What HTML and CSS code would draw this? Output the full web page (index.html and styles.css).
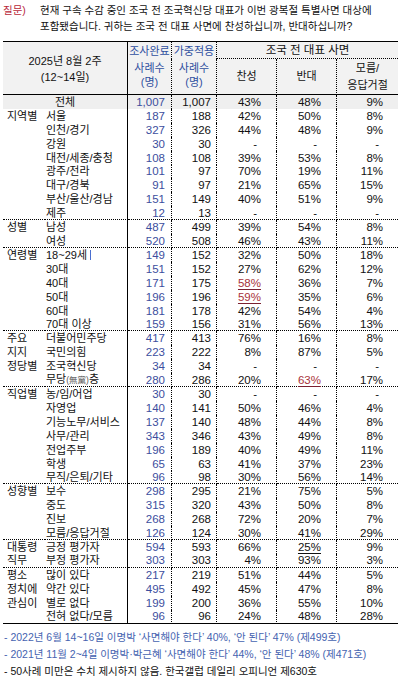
FILE: index.html
```html
<!DOCTYPE html>
<html lang="ko">
<head>
<meta charset="utf-8">
<title>조국 전 대표 사면</title>
<link rel="stylesheet" href="styles.css">
</head>
<body>
<div class="page">
  <div class="question">
    <span class="q-label">질문)</span>
    <p class="q-text"><span class="q-line">현재 구속 수감 중인 조국 전 조국혁신당 대표가 이번 광복절 특별사면 대상에</span><span class="q-line">포함됐습니다. 귀하는 조국 전 대표 사면에 찬성하십니까, 반대하십니까?</span></p>
  </div>
  <table class="poll">
    <colgroup>
      <col class="w-cat"><col class="w-lab"><col class="w-n1"><col class="w-n2"><col class="w-p"><col class="w-p"><col class="w-p3">
    </colgroup>
    <thead>
      <tr class="h1">
        <th class="h-period" colspan="2" rowspan="2">2025년 8월 2주<br>(12~14일)</th>
        <th class="h-blue dot-r">조사완료</th>
        <th class="h-blue dot-r">가중적용</th>
        <th class="h-topic" colspan="3">조국 전 대표 사면</th>
      </tr>
      <tr class="h2">
        <th class="h-blue h-n dot-r">사례수<br>(명)</th>
        <th class="h-blue h-n dot-r">사례수<br>(명)</th>
        <th class="h-opt dot-r">찬성</th>
        <th class="h-opt dot-r">반대</th>
        <th class="h-opt h-dk">모름/<br>응답거절</th>
      </tr>
    </thead>
    <tbody>
      <tr class="total"><td class="lab-total" colspan="2">전체</td><td class="n1">1,007</td><td class="n2">1,007</td><td class="p">43%</td><td class="p">48%</td><td class="p last-c">9%</td></tr>

      <tr><td class="cat">지역별</td><td class="lab">서울</td><td class="n1">187</td><td class="n2">188</td><td class="p">42%</td><td class="p">50%</td><td class="p last-c">8%</td></tr>
      <tr><td class="cat"></td><td class="lab">인천/경기</td><td class="n1">327</td><td class="n2">326</td><td class="p">44%</td><td class="p">48%</td><td class="p last-c">9%</td></tr>
      <tr><td class="cat"></td><td class="lab">강원</td><td class="n1">30</td><td class="n2">30</td><td class="p dash">-</td><td class="p dash">-</td><td class="p last-c dash">-</td></tr>
      <tr><td class="cat"></td><td class="lab">대전/세종/충청</td><td class="n1">108</td><td class="n2">108</td><td class="p">39%</td><td class="p">53%</td><td class="p last-c">8%</td></tr>
      <tr><td class="cat"></td><td class="lab">광주/전라</td><td class="n1">101</td><td class="n2">97</td><td class="p">70%</td><td class="p">19%</td><td class="p last-c">11%</td></tr>
      <tr><td class="cat"></td><td class="lab">대구/경북</td><td class="n1">91</td><td class="n2">97</td><td class="p">21%</td><td class="p">65%</td><td class="p last-c">15%</td></tr>
      <tr><td class="cat"></td><td class="lab">부산/울산/경남</td><td class="n1">151</td><td class="n2">149</td><td class="p">40%</td><td class="p">51%</td><td class="p last-c">9%</td></tr>
      <tr class="end"><td class="cat"></td><td class="lab">제주</td><td class="n1">12</td><td class="n2">13</td><td class="p dash">-</td><td class="p dash">-</td><td class="p last-c dash">-</td></tr>

      <tr><td class="cat">성별</td><td class="lab">남성</td><td class="n1">487</td><td class="n2">499</td><td class="p">39%</td><td class="p">54%</td><td class="p last-c">8%</td></tr>
      <tr class="end"><td class="cat"></td><td class="lab">여성</td><td class="n1">520</td><td class="n2">508</td><td class="p">46%</td><td class="p">43%</td><td class="p last-c">11%</td></tr>

      <tr><td class="cat">연령별</td><td class="lab">18~29세<span class="cursor"></span></td><td class="n1">149</td><td class="n2">152</td><td class="p">32%</td><td class="p">50%</td><td class="p last-c">18%</td></tr>
      <tr><td class="cat"></td><td class="lab">30대</td><td class="n1">151</td><td class="n2">152</td><td class="p">27%</td><td class="p">62%</td><td class="p last-c">12%</td></tr>
      <tr><td class="cat"></td><td class="lab">40대</td><td class="n1">171</td><td class="n2">175</td><td class="p"><span class="hl-red">58%</span></td><td class="p">36%</td><td class="p last-c">7%</td></tr>
      <tr><td class="cat"></td><td class="lab">50대</td><td class="n1">196</td><td class="n2">196</td><td class="p"><span class="hl-red">59%</span></td><td class="p">35%</td><td class="p last-c">6%</td></tr>
      <tr><td class="cat"></td><td class="lab">60대</td><td class="n1">181</td><td class="n2">178</td><td class="p">42%</td><td class="p">54%</td><td class="p last-c">4%</td></tr>
      <tr class="end"><td class="cat"></td><td class="lab">70대 이상</td><td class="n1">159</td><td class="n2">156</td><td class="p">31%</td><td class="p">56%</td><td class="p last-c">13%</td></tr>

      <tr><td class="cat">주요</td><td class="lab">더불어민주당</td><td class="n1">417</td><td class="n2">413</td><td class="p">76%</td><td class="p">16%</td><td class="p last-c">8%</td></tr>
      <tr><td class="cat">지지</td><td class="lab">국민의힘</td><td class="n1">223</td><td class="n2">222</td><td class="p">8%</td><td class="p">87%</td><td class="p last-c">5%</td></tr>
      <tr><td class="cat">정당별</td><td class="lab">조국혁신당</td><td class="n1">34</td><td class="n2">34</td><td class="p dash">-</td><td class="p dash">-</td><td class="p last-c dash">-</td></tr>
      <tr class="end"><td class="cat"></td><td class="lab">무당<span class="hanja">(無黨)</span>층</td><td class="n1">280</td><td class="n2">286</td><td class="p">20%</td><td class="p"><span class="hl-red">63%</span></td><td class="p last-c">17%</td></tr>

      <tr><td class="cat">직업별</td><td class="lab">농/임/어업</td><td class="n1">30</td><td class="n2">30</td><td class="p dash">-</td><td class="p dash">-</td><td class="p last-c dash">-</td></tr>
      <tr><td class="cat"></td><td class="lab">자영업</td><td class="n1">140</td><td class="n2">141</td><td class="p">50%</td><td class="p">46%</td><td class="p last-c">4%</td></tr>
      <tr><td class="cat"></td><td class="lab">기능노무/서비스</td><td class="n1">137</td><td class="n2">140</td><td class="p">48%</td><td class="p">44%</td><td class="p last-c">8%</td></tr>
      <tr><td class="cat"></td><td class="lab">사무/관리</td><td class="n1">343</td><td class="n2">346</td><td class="p">43%</td><td class="p">49%</td><td class="p last-c">8%</td></tr>
      <tr><td class="cat"></td><td class="lab">전업주부</td><td class="n1">196</td><td class="n2">189</td><td class="p">40%</td><td class="p">49%</td><td class="p last-c">11%</td></tr>
      <tr><td class="cat"></td><td class="lab">학생</td><td class="n1">65</td><td class="n2">63</td><td class="p">41%</td><td class="p">37%</td><td class="p last-c">23%</td></tr>
      <tr class="end"><td class="cat"></td><td class="lab">무직/은퇴/기타</td><td class="n1">96</td><td class="n2">98</td><td class="p">30%</td><td class="p">56%</td><td class="p last-c">14%</td></tr>

      <tr><td class="cat">성향별</td><td class="lab">보수</td><td class="n1">298</td><td class="n2">295</td><td class="p">21%</td><td class="p">75%</td><td class="p last-c">5%</td></tr>
      <tr><td class="cat"></td><td class="lab">중도</td><td class="n1">315</td><td class="n2">320</td><td class="p">43%</td><td class="p">50%</td><td class="p last-c">8%</td></tr>
      <tr><td class="cat"></td><td class="lab">진보</td><td class="n1">268</td><td class="n2">268</td><td class="p">72%</td><td class="p">20%</td><td class="p last-c">7%</td></tr>
      <tr class="end"><td class="cat"></td><td class="lab">모름/응답거절</td><td class="n1">126</td><td class="n2">124</td><td class="p">30%</td><td class="p">41%</td><td class="p last-c">29%</td></tr>

      <tr><td class="cat">대통령</td><td class="lab">긍정 평가자</td><td class="n1">594</td><td class="n2">593</td><td class="p">66%</td><td class="p"><span class="hl-black">25%</span></td><td class="p last-c">9%</td></tr>
      <tr class="end"><td class="cat">직무</td><td class="lab">부정 평가자</td><td class="n1">303</td><td class="n2">303</td><td class="p">4%</td><td class="p">93%</td><td class="p last-c">3%</td></tr>

      <tr><td class="cat">평소</td><td class="lab">많이 있다</td><td class="n1">217</td><td class="n2">219</td><td class="p">51%</td><td class="p">44%</td><td class="p last-c">5%</td></tr>
      <tr><td class="cat">정치에</td><td class="lab">약간 있다</td><td class="n1">495</td><td class="n2">492</td><td class="p">45%</td><td class="p">47%</td><td class="p last-c">8%</td></tr>
      <tr><td class="cat">관심이</td><td class="lab">별로 없다</td><td class="n1">199</td><td class="n2">200</td><td class="p">36%</td><td class="p">55%</td><td class="p last-c">10%</td></tr>
      <tr class="final"><td class="cat"></td><td class="lab">전혀 없다/모름</td><td class="n1">96</td><td class="n2">96</td><td class="p">24%</td><td class="p">48%</td><td class="p last-c">28%</td></tr>
    </tbody>
  </table>
  <ul class="notes">
    <li class="note-blue">- 2022년 6월 14~16일 이명박 ‘사면해야 한다’ 40%, ‘안 된다’ 47% (제499호)</li>
    <li class="note-blue">- 2021년 11월 2~4일 이명박·박근혜 ‘사면해야 한다’ 44%, ‘안 된다’ 48% (제471호)</li>
    <li class="note-black">- 50사례 미만은 수치 제시하지 않음. 한국갤럽 데일리 오피니언 제630호</li>
  </ul>
</div>
</body>
</html>
```
FILE: styles.css
```css
html, body {
  margin: 0;
  padding: 0;
  background: #ffffff;
}

body {
  font-family: "Liberation Sans", "Noto Sans CJK KR", sans-serif;
  color: #111111;
}

.page {
  padding: 2px 0 0 3px;
  width: 398px;
}

/* question */
.question {
  display: flex;
  font-size: 10.5px;
  line-height: 16px;
}

.q-label {
  flex: none;
  width: 37px;
  color: #b8283a;
}

.q-text {
  margin: 0;
  flex: 1;
}

.q-line {
  display: block;
  white-space: nowrap;
}

/* table */
.poll {
  margin-top: 7px;
  border-collapse: separate;
  border-spacing: 0;
  table-layout: fixed;
  width: 395px;
}

.w-cat { width: 42px; }
.w-lab { width: 83px; }
.w-n1 { width: 44px; }
.w-n2 { width: 45px; }
.w-p { width: 60px; }
.w-p3 { width: 61px; }

.poll th,
.poll td {
  padding: 0;
  font-weight: normal;
  white-space: nowrap;
  overflow: visible;
}

.poll thead th {
  background: #f2f2f2;
  text-align: center;
  font-size: 11px;
  vertical-align: middle;
}

.h1 { height: 18px; }
.h2 { height: 36px; }

.h1 th {
  border-top: 1px solid #000;
  line-height: 16px;
}

.h2 th {
  border-bottom: 1px solid #000;
}

.h-period {
  border-right: 1px solid #000;
  border-bottom: 1px solid #000;
  line-height: 16px;
  padding-top: 2px !important;
}

.h-blue {
  color: #2f4f9f;
}

.h-topic {
  border-bottom: 1px dotted #000;
  font-size: 11.5px !important;
}

.h-n {
  line-height: 14px;
  padding-bottom: 3px !important;
}

.h-opt {
  line-height: 17px;
}

.h-dk {
  padding-left: 0;
}

.dot-r {
  border-right: 1px dotted #000;
}

/* body */
.poll tbody tr {
  height: 13.92px;
}

.poll tbody td {
  line-height: 12px;
  vertical-align: middle;
  font-size: 11px;
}

.total td {
  background: #efefef;
}

.lab-total {
  text-align: center;
  border-right: 1px solid #000;
}

.cat {
  padding-left: 4px !important;
}

.lab {
  padding-left: 1px !important;
  border-right: 1px solid #000;
}

.n1 {
  text-align: right;
  padding-right: 6px !important;
  border-right: 1px dotted #000;
  color: #3c4e9e;
  font-size: 11.5px !important;
}

.n2 {
  text-align: right;
  padding-right: 5px !important;
  border-right: 1px dotted #000;
  font-size: 11.5px !important;
}

.p {
  text-align: right;
  padding-right: 15px !important;
  border-right: 1px dotted #000;
  font-size: 11.5px !important;
}

.p.last-c {
  border-right: none;
}

.p.dash {
  padding-right: 19px !important;
}

.end td {
  border-bottom: 1px dotted #000;
}

.final td {
  border-bottom: 1px solid #000;
}

.hl-red {
  color: #a8323a;
  text-decoration: underline;
  text-decoration-color: #7a2030;
  text-underline-offset: 2px;
}

.hl-black {
  text-decoration: underline;
  text-underline-offset: 2px;
}

.hanja {
  font-size: 8.5px;
  color: #555555;
}

.cursor {
  display: inline-block;
  width: 1px;
  height: 10px;
  margin-left: 3px;
  background: #4a6fd0;
  vertical-align: -1px;
}

/* notes */
.notes {
  list-style: none;
  margin: 5px 0 0 1px;
  padding: 0;
  font-size: 10.5px;
  line-height: 17px;
}

.notes li {
  white-space: nowrap;
}

.note-blue {
  color: #4563b0;
}

.note-black {
  color: #111111;
}
```
